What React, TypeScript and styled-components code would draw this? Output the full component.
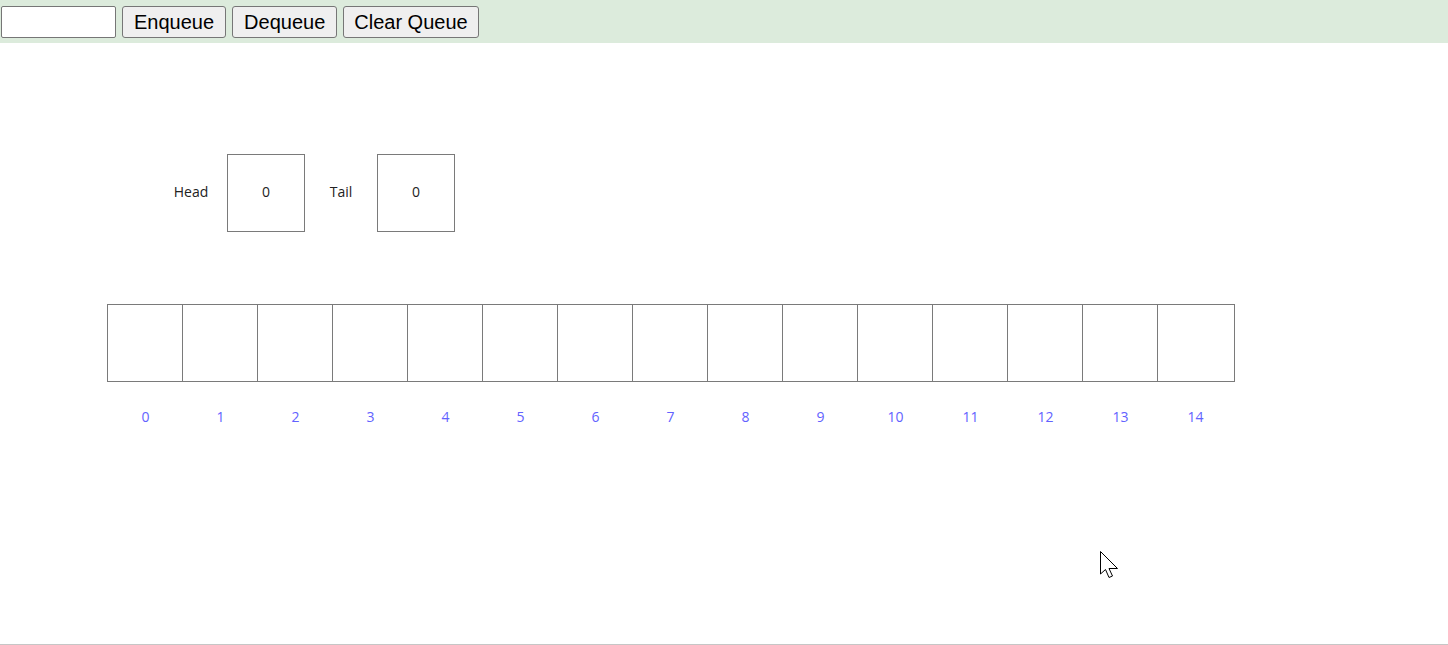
import React from "react";
import styled, { createGlobalStyle } from "styled-components";

const GlobalStyle = createGlobalStyle`
  html, body { margin: 0; padding: 0; background: #ffffff; }
  body { font-family: "Liberation Sans", Arial, sans-serif; }
`;

const Page = styled.div`
  position: relative;
  width: 1448px;
  height: 645px;
  overflow: hidden;
`;

const Toolbar = styled.div`
  display: flex;
  align-items: center;
  gap: 6px;
  height: 43px;
  padding-left: 1px;
  background: #dcebdc;
  box-sizing: border-box;
`;

const TextInput = styled.input`
  width: 115px;
  height: 32px;
  box-sizing: border-box;
  border: 1px solid #767676;
  border-radius: 2px;
  background: #ffffff;
  font: 20px "Liberation Sans", Arial, sans-serif;
  padding: 0 4px;
`;

const ActionButton = styled.button<{ $pad?: number }>`
  height: 32px;
  box-sizing: border-box;
  padding: 0 ${(p) => p.$pad ?? 11}px;
  border: 1px solid #767676;
  border-radius: 3px;
  background: #efefef;
  color: #000000;
  font: 20px "Liberation Sans", Arial, sans-serif;
  line-height: 1;
`;

const Canvas = styled.div`
  height: 602px;
  box-sizing: border-box;
  border-bottom: 1px solid #c6c6c6;
  padding-top: 111px;
  font-family: "Open Sans", "Noto Sans", sans-serif;
`;

const RegisterRow = styled.div`
  display: flex;
  padding-left: 155px;
`;

const Register = styled.div`
  display: grid;
  grid-template-columns: 72px 78px;
  align-items: center;
`;

const RegisterLabel = styled.span`
  text-align: center;
  font-size: 14px;
  color: #222222;
  padding-bottom: 4px;
`;

const Box = styled.div`
  width: 78px;
  height: 78px;
  box-sizing: border-box;
  border: 1px solid #7a7a7a;
  display: flex;
  align-items: center;
  justify-content: center;
  padding-bottom: 3px;
  font-size: 14px;
  color: #222222;
`;

const ArrayBlock = styled.div`
  margin-top: 72px;
  margin-left: 107px;
  width: 1128px;
`;

const Cells = styled.div`
  display: grid;
  grid-template-columns: repeat(14, 75px) 1fr;
  height: 78px;
  box-sizing: border-box;
  border: 1px solid #7a7a7a;
  border-left: none;
`;

const Cell = styled.div`
  border-left: 1px solid #7a7a7a;
`;

const Indices = styled.div`
  display: grid;
  grid-template-columns: repeat(15, 75px);
  padding-top: 25px;
  padding-left: 1px;
`;

const Index = styled.span`
  text-align: center;
  font-size: 14px;
  color: #6262ff;
`;

const Cursor = styled.svg`
  position: absolute;
  left: 1099px;
  top: 550px;
`;

export default function App() {
  const slots = Array.from({ length: 15 }, (_, i) => i);
  return (
    <Page>
      <GlobalStyle />
      <Toolbar>
        <TextInput type="text" />
        <ActionButton>Enqueue</ActionButton>
        <ActionButton>Dequeue</ActionButton>
        <ActionButton $pad={10}>Clear Queue</ActionButton>
      </Toolbar>
      <Canvas>
        <RegisterRow>
          <Register>
            <RegisterLabel>Head</RegisterLabel>
            <Box>0</Box>
          </Register>
          <Register>
            <RegisterLabel>Tail</RegisterLabel>
            <Box>0</Box>
          </Register>
        </RegisterRow>
        <ArrayBlock>
          <Cells>
            {slots.map((i) => (
              <Cell key={i} />
            ))}
          </Cells>
          <Indices>
            {slots.map((i) => (
              <Index key={i}>{i}</Index>
            ))}
          </Indices>
        </ArrayBlock>
      </Canvas>
      <Cursor width="22" height="30" viewBox="0 0 22 30">
        <path
          d="M1.5 1.5 L1.5 24 L6.5 19.5 L10 27.5 L13.5 26 L10 18.5 L18.5 18.5 Z"
          fill="#ffffff"
          stroke="#000000"
          strokeWidth="1"
          strokeLinejoin="miter"
        />
      </Cursor>
    </Page>
  );
}
